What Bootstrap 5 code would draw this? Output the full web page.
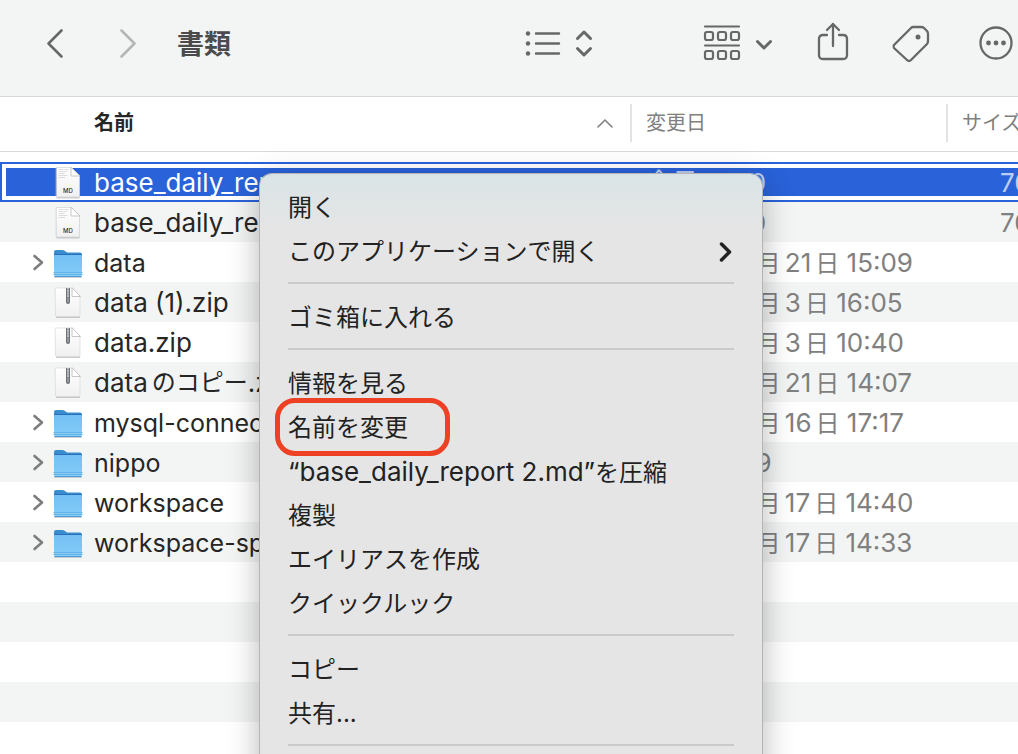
<!DOCTYPE html>
<html lang="ja">
<head>
<meta charset="utf-8">
<meta name="viewport" content="width=device-width, initial-scale=1">
<title>書類</title>
<link href="https://cdn.jsdelivr.net/npm/bootstrap@5.3.0/dist/css/bootstrap.min.css" rel="stylesheet">
<style>
  body { font-family: Inter, "Noto Sans CJK JP", sans-serif; color: #262626; background: #fff; }
  .finder { height: 100vh; }
  svg { fill: none; stroke: currentColor; stroke-linecap: round; stroke-linejoin: round; }
  .toolbar { height: 97px; padding: 0 4px 10px 41px; background: #f3f5f5; border-bottom: 1px solid #d6d6d6; color: #666867; }
  .tool { border: 0; background: none; padding: 0; color: inherit; line-height: 0; }
  .tool svg, .file-icon, .twist svg { display: block; }
  .tool-forward { margin-left: 41px; color: #b4b6b5; }
  .tool-group { margin-left: 107px; }
  .tool-share { margin-left: 43px; }
  .tool-tag { margin-left: 40px; }
  .tool-more { margin-left: 46px; }
  .folder-title { font-size: 27px; line-height: 40px; font-weight: 700; color: #4b4b4b; margin-left: 35px; padding-top: 3px; }
  .files { display: block; width: calc(100% + 8px); white-space: nowrap; }
  .files thead, .files tbody { display: block; }
  .files tbody { padding-top: 10px; }
  .files td, .files th { display: block; padding: 0; overflow: hidden; }
  .head-strip, .file-row { display: grid; grid-template-columns: minmax(0, 1fr) 316px 80px; align-items: center; }
  .head-strip { height: 55px; padding-bottom: 2px; border-bottom: 1px solid #d9d9d9; font-size: 20px; line-height: 38px; color: #808080; }
  .files .head-strip .name-head { display: flex; font-weight: 700; color: #262626; padding: 0 16px 0 94px; }
  .files .head-strip .divided { font-weight: 400; border-left: 2px solid #e3e3e3; padding-left: 14px; }
  .file-row { height: 40px; font-size: 26px; line-height: 40px; color: #808080; }
  .file-row:nth-child(even) { background: #f3f5f5; }
  .files .file-row td { padding-top: 1px; height: 40px; }
  .files .file-row .name-cell { display: flex; align-items: center; color: #262626; padding-left: 32px; }
  .files .file-row .date-cell { padding-left: 16px; }
  .files .file-row .size-cell { padding-left: 54px; }
  .folder-name { font-size: 25px; }
  .kanji { font-size: 24px; margin: 0 4px; }
  .kanji-end { font-size: 24px; margin-left: 4px; }
  .twist { width: 20px; flex: none; color: #7d7d7d; }
  .file-icon { width: 32px; height: 34px; flex: none; margin-right: 10px; stroke: none; }
  .file-row.chosen { background: #2962d9; color: #bccdf3; box-shadow: inset 0 0 0 2px #2962d9, inset 0 0 0 6px #fff; }
  .files .chosen .name-cell { color: #fff; }
  .context { position: absolute; top: 174px; left: 260px; width: 502px; padding: 11px 28px 40px; border-radius: 12px;
    background: linear-gradient(#dae4e7, #e5e5e5 56px); box-shadow: 0 0 0 1px #b5b5b5, 0 8px 32px rgba(0,0,0,.3); }
  .choice { display: flex; width: 100%; height: 44px; border: 0; background: none; padding: 1px 0 0; align-items: center; justify-content: space-between; font-size: 24px; line-height: 43px; color: #222; white-space: nowrap; }
  .latin { font-size: 26px; }
  .rule { height: 2px; margin: 9px 0 11px; background: #cacaca; }
  .ring { position: absolute; top: -7px; left: -13px; width: 175px; height: 58px; border: 5px solid #ee4023; border-radius: 20px; pointer-events: none; }
</style>
<script src="https://cdn.jsdelivr.net/npm/bootstrap@5.3.0/dist/js/bootstrap.bundle.min.js"></script>
</head>
<body>
<svg width="0" height="0" class="position-absolute" aria-hidden="true">
  <defs>
    <linearGradient id="paper" x2="0" y2="1"><stop stop-color="#fff"/><stop offset="1" stop-color="#f0f0f0"/></linearGradient>
    <linearGradient id="blue" x2="0" y2="1"><stop stop-color="#74bff3"/><stop offset="1" stop-color="#84cdfa"/></linearGradient>
    <symbol id="folder" viewBox="0 0 32 34">
      <path d="M2 31h28v1H2z" fill="#9aa4aa" opacity=".5"/>
      <path d="M2 6q0-2 2-2h6q2 0 3 1l2 1.500h13q2 0 2 2v6H2z" fill="#398dce"/>
      <path d="M2 10q0-1 1-1h26q1 0 1 1v19q0 2-2 2H4q-2 0-2-2z" fill="url(#blue)"/>
      <path d="M3 8.500h26" stroke="#286fb8" stroke-width="1"/>
      <path d="M2 26.500h28M2 28.500h28" stroke="#69b4e5" stroke-width="1"/>
      <path d="M3 30.500h26" stroke="#4c9dd4" stroke-width="1"/>
    </symbol>
    <symbol id="doc" viewBox="0 0 32 34">
      <path d="M4.500 2h15l8 8v21.500h-23z" fill="#aaa" opacity=".6" transform="translate(0 1)"/>
      <path d="M4.500 1.500h14.500l8.500 8.500v21h-23z" fill="url(#paper)" stroke="#d2d2d2" stroke-width=".7"/>
      <path d="M19 1.500v8.500h8.500z" fill="#fff" stroke="#c6c6c6" stroke-width="1"/>
      <path d="M7 3.500h4m2 0h3M7 5.500h8M7 7.500h5M7 9.500h8M7 11.500h6" stroke="#d4d4d4" stroke-width=".8"/>
      <text x="16" y="27" text-anchor="middle" font-size="6" font-weight="500" fill="#333">MD</text>
    </symbol>
    <symbol id="zip" viewBox="0 0 32 34">
      <path d="M4 3h16l8 8v21h-24z" fill="#aaa" opacity=".6"/>
      <path d="M3.500 2h16l8.500 8.500v19q0 1-1 1h-22.500q-1 0-1-1z" fill="url(#paper)" stroke="#d8d8d8" stroke-width=".7"/>
      <path d="M20 2v8.500h8z" fill="#fff" stroke="#c6c6c6" stroke-width="1"/>
      <path d="M14 2h4v14q0 2-2 2t-2-2z" fill="#6e7275"/>
      <path d="M16 2v9" stroke="#d6d8da" stroke-width="1.500" stroke-dasharray="1 1.500"/>
      <path d="M16 12v4" stroke="#b9bdc0" stroke-width="1"/>
    </symbol>
    <symbol id="chev" viewBox="0 0 12 18"><path d="M2.500 2l7.500 6.500-7.500 6.500" stroke="currentColor" stroke-width="2.600" fill="none"/></symbol>
  </defs>
</svg>
<main class="finder position-relative overflow-hidden">
  <header class="toolbar d-flex align-items-center">
    <button class="tool" aria-label="戻る"><svg width="30" height="34"><path d="M20.500 4.500L7.500 17.500l13 13" stroke-width="2.600"/></svg></button>
    <button class="tool tool-forward" aria-label="進む" disabled><svg width="30" height="34"><path d="M9.500 4.500l13 13-13 13" stroke-width="2.600"/></svg></button>
    <h1 class="folder-title mb-0">書類</h1>
    <div class="d-flex align-items-center ms-auto">
      <button class="tool" aria-label="リスト表示"><svg width="70" height="34"><g stroke-width="2.400"><path d="M12 7.500h23M12 17.500h23M12 27.500h23"/><path d="M53.500 12.500l6.500-6.500 6.500 6.500M53.500 22.500l6.500 6.500 6.500-6.500" stroke-width="3"/></g><g fill="currentColor" stroke="none"><circle cx="4" cy="7.500" r="2.200"/><circle cx="4" cy="17.500" r="2.200"/><circle cx="4" cy="27.500" r="2.200"/></g></svg></button>
      <button class="tool tool-group" aria-label="グループ"><svg width="72" height="40" viewBox="0 2 72 40"><g stroke-width="2.200"><path d="M4 5.500h34M4 24.500h34"/><rect x="4" y="11" width="8" height="8" rx="2"/><rect x="17" y="11" width="8" height="8" rx="2"/><rect x="30" y="11" width="8" height="8" rx="2"/><rect x="4" y="30" width="8" height="8" rx="2"/><rect x="17" y="30" width="8" height="8" rx="2"/><rect x="30" y="30" width="8" height="8" rx="2"/><path d="M56.500 20.500l6.500 6.500 6.500-6.500" stroke-width="3"/></g></svg></button>
      <button class="tool tool-share" aria-label="共有"><svg width="34" height="42" viewBox="0 1 34 42"><path d="M11 14H7q-4 0-4 4v16q0 4 4 4h20q4 0 4-4V18q0-4-4-4h-4M17 25V3M11 9l6-6 6 6" stroke-width="2.300"/></svg></button>
      <button class="tool tool-tag" aria-label="タグ"><svg width="42" height="42"><path d="M4 23L21 6q1-1 2-1h8q2 0 3 1l3 3q1 1 1 3v7q0 2-1 3L21 38q-2 2-4 0L4 26q-1-1.500 0-3z" stroke-width="2.300"/><circle cx="28" cy="15" r="2.500" fill="currentColor" stroke="none"/></svg></button>
      <button class="tool tool-more" aria-label="その他"><svg width="36" height="36"><circle cx="18" cy="18" r="15.500" stroke-width="2.300"/><g fill="currentColor" stroke="none"><circle cx="10.500" cy="18" r="2.400"/><circle cx="18" cy="18" r="2.400"/><circle cx="25.500" cy="18" r="2.400"/></g></svg></button>
    </div>
  </header>
  <table class="files">
    <thead><tr class="head-strip">
      <th class="name-head align-items-center justify-content-between">名前<svg width="18" height="12"><path d="M2 10l7-7 7 7" stroke="#808080" stroke-width="1.600"/></svg></th>
      <th class="divided">変更日</th><th class="divided">サイズ</th>
    </tr></thead>
    <tbody>
      <tr class="file-row chosen"><td class="name-cell"><span class="twist"></span><svg class="file-icon"><use href="#doc"/></svg>base_daily_report 2.md</td><td class="date-cell">今日 15:10</td><td class="size-cell">70</td></tr>
      <tr class="file-row"><td class="name-cell"><span class="twist"></span><svg class="file-icon"><use href="#doc"/></svg>base_daily_report.md</td><td class="date-cell">今日 15:10</td><td class="size-cell">70</td></tr>
      <tr class="file-row"><td class="name-cell folder-name"><span class="twist"><svg width="12" height="18"><use href="#chev"/></svg></span><svg class="file-icon"><use href="#folder"/></svg>data</td><td class="date-cell">2021<span class="kanji">年</span>9<span class="kanji">月</span>21<span class="kanji-end">日</span> 15:09</td><td></td></tr>
      <tr class="file-row"><td class="name-cell"><span class="twist"></span><svg class="file-icon"><use href="#zip"/></svg>data (1).zip</td><td class="date-cell">2021<span class="kanji">年</span>9<span class="kanji">月</span>3<span class="kanji-end">日</span> 16:05</td><td></td></tr>
      <tr class="file-row"><td class="name-cell"><span class="twist"></span><svg class="file-icon"><use href="#zip"/></svg>data.zip</td><td class="date-cell">2021<span class="kanji">年</span>9<span class="kanji">月</span>3<span class="kanji-end">日</span> 10:40</td><td></td></tr>
      <tr class="file-row"><td class="name-cell"><span class="twist"></span><svg class="file-icon"><use href="#zip"/></svg>data<span class="kanji-end">のコピー</span>.zip</td><td class="date-cell">2021<span class="kanji">年</span>9<span class="kanji">月</span>21<span class="kanji-end">日</span> 14:07</td><td></td></tr>
      <tr class="file-row"><td class="name-cell folder-name"><span class="twist"><svg width="12" height="18"><use href="#chev"/></svg></span><svg class="file-icon"><use href="#folder"/></svg>mysql-connector</td><td class="date-cell">2021<span class="kanji">年</span>9<span class="kanji">月</span>16<span class="kanji-end">日</span> 17:17</td><td></td></tr>
      <tr class="file-row"><td class="name-cell folder-name"><span class="twist"><svg width="12" height="18"><use href="#chev"/></svg></span><svg class="file-icon"><use href="#folder"/></svg>nippo</td><td class="date-cell">今日 15:09</td><td></td></tr>
      <tr class="file-row"><td class="name-cell folder-name"><span class="twist"><svg width="12" height="18"><use href="#chev"/></svg></span><svg class="file-icon"><use href="#folder"/></svg>workspace</td><td class="date-cell">2021<span class="kanji">年</span>9<span class="kanji">月</span>17<span class="kanji-end">日</span> 14:40</td><td></td></tr>
      <tr class="file-row"><td class="name-cell folder-name"><span class="twist"><svg width="12" height="18"><use href="#chev"/></svg></span><svg class="file-icon"><use href="#folder"/></svg>workspace-sp</td><td class="date-cell">2021<span class="kanji">年</span>9<span class="kanji">月</span>17<span class="kanji-end">日</span> 14:33</td><td></td></tr>
      <tr class="file-row"></tr><tr class="file-row"></tr><tr class="file-row"></tr><tr class="file-row"></tr><tr class="file-row"></tr>
    </tbody>
  </table>
  <div class="context">
    <button class="choice">開く</button>
    <button class="choice">このアプリケーションで開く<svg width="18" height="24"><path d="M5.500 4l8 8-8 8" stroke-width="3.500"/></svg></button>
    <div class="rule"></div>
    <button class="choice">ゴミ箱に入れる</button>
    <div class="rule"></div>
    <button class="choice">情報を見る</button>
    <div class="position-relative"><button class="choice">名前を変更</button><span class="ring"></span></div>
    <button class="choice"><span><span class="latin">“base_daily_report 2.md”</span>を圧縮</span></button>
    <button class="choice">複製</button>
    <button class="choice">エイリアスを作成</button>
    <button class="choice">クイックルック</button>
    <div class="rule"></div>
    <button class="choice">コピー</button>
    <button class="choice">共有...</button>
    <div class="rule"></div>
  </div>
</main>
</body>
</html>
